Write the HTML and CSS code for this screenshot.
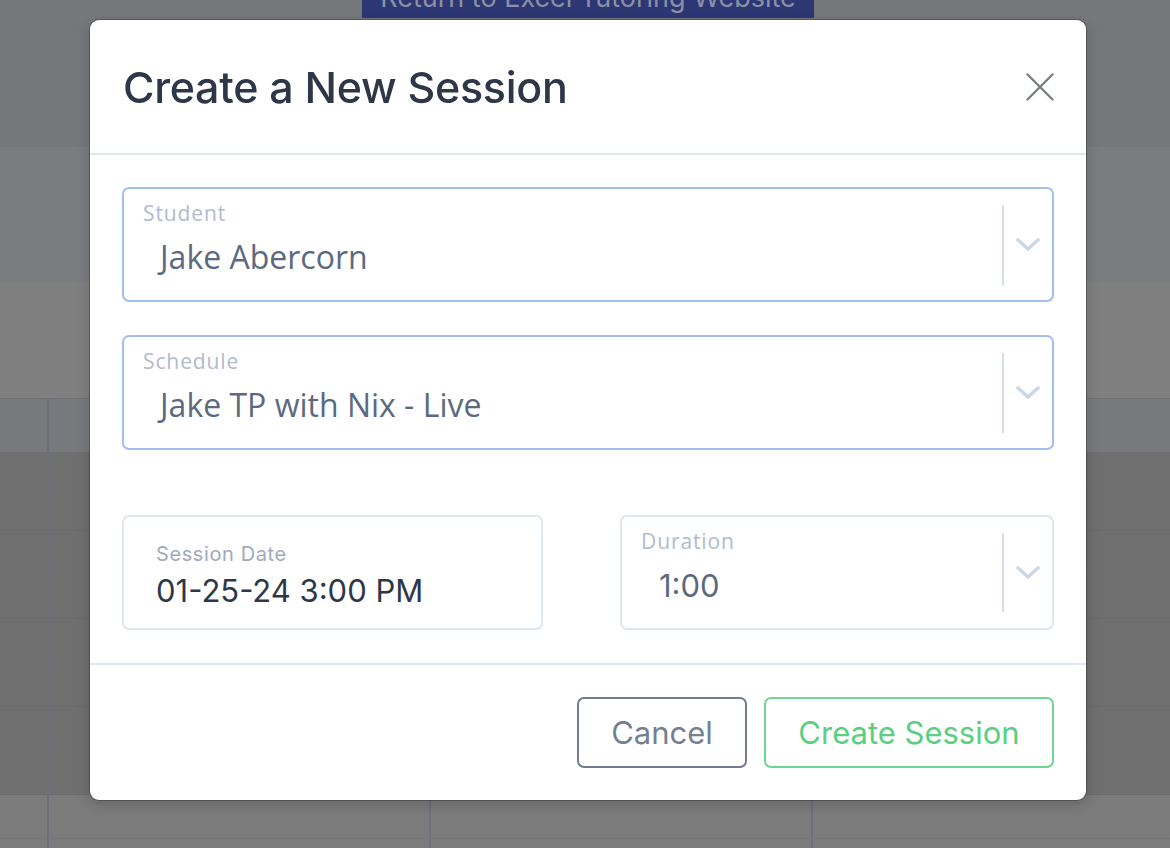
FILE: index.html
```html
<!doctype html>
<html lang="en-us">

<head>
    <title>Sessions : Calendar</title>

    <link rel="stylesheet" href="styles.css">
</head>

<body>
    <div id="calendar">
        <div class="cal-top">
            <a class="return-btn" href="#">Return to Excel Tutoring Website</a>
        </div>
        <div class="cal-band band-a"></div>
        <div class="cal-band band-b"></div>

        <div class="cal-head">
            <div class="gutter"></div>
            <div class="day"></div>
            <div class="day"></div>
            <div class="day"></div>
        </div>

        <div class="slot busy short half"><div class="gutter"></div><div class="day"></div><div class="day"></div><div class="day"></div></div>
        <div class="slot busy"><div class="gutter"></div><div class="day"></div><div class="day"></div><div class="day"></div></div>
        <div class="slot busy half"><div class="gutter"></div><div class="day"></div><div class="day"></div><div class="day"></div></div>
        <div class="slot busy"><div class="gutter"></div><div class="day"></div><div class="day"></div><div class="day"></div></div>
        <div class="slot busy half"><div class="gutter"></div><div class="day"></div><div class="day"></div><div class="day"></div></div>
        <div class="slot busy"><div class="gutter"></div><div class="day"></div><div class="day"></div><div class="day"></div></div>
        <div class="slot busy half"><div class="gutter"></div><div class="day"></div><div class="day"></div><div class="day"></div></div>
        <div class="slot busy"><div class="gutter"></div><div class="day"></div><div class="day"></div><div class="day"></div></div>
        <div class="slot half"><div class="gutter"></div><div class="day"></div><div class="day"></div><div class="day"></div></div>
        <div class="slot"><div class="gutter"></div><div class="day"></div><div class="day"></div><div class="day"></div></div>
    </div>

    <div id="overlay">
        <div class="modal">
            <div class="modal-header">
                <h2>Create a New Session</h2>
                <button class="close" aria-label="Close">
                    <svg width="28" height="28" viewBox="0 0 28 28">
                        <path d="M1.5 1.5 L26.5 26.5 M26.5 1.5 L1.5 26.5" stroke="#7a7e85" stroke-width="2.4" stroke-linecap="round" fill="none" />
                    </svg>
                </button>
            </div>

            <div class="modal-body">
                <div class="field select focused">
                    <div class="field-main">
                        <div class="label">Student</div>
                        <div class="value">Jake Abercorn</div>
                    </div>
                    <span class="sep"></span>
                    <span class="chev">
                        <svg width="24" height="14" viewBox="0 0 24 14"><path d="M2 2 L12 11 L22 2" stroke="#cdd6e4" stroke-width="3.6" stroke-linecap="round" stroke-linejoin="round" fill="none" /></svg>
                    </span>
                </div>

                <div class="field select focused">
                    <div class="field-main">
                        <div class="label">Schedule</div>
                        <div class="value">Jake TP with Nix - Live</div>
                    </div>
                    <span class="sep"></span>
                    <span class="chev">
                        <svg width="24" height="14" viewBox="0 0 24 14"><path d="M2 2 L12 11 L22 2" stroke="#cdd6e4" stroke-width="3.6" stroke-linecap="round" stroke-linejoin="round" fill="none" /></svg>
                    </span>
                </div>

                <div class="row">
                    <div class="field date">
                        <div class="date-label">Session Date</div>
                        <div class="date-value">01-25-24 3:00 PM</div>
                    </div>
                    <div class="field select duration">
                        <div class="field-main">
                            <div class="label">Duration</div>
                            <div class="value">1:00</div>
                        </div>
                        <span class="sep"></span>
                        <span class="chev">
                            <svg width="24" height="14" viewBox="0 0 24 14"><path d="M2 2 L12 11 L22 2" stroke="#cdd6e4" stroke-width="3.6" stroke-linecap="round" stroke-linejoin="round" fill="none" /></svg>
                        </span>
                    </div>
                </div>
            </div>

            <div class="modal-footer">
                <button class="btn btn-cancel">Cancel</button>
                <button class="btn btn-create">Create Session</button>
            </div>
        </div>
    </div>
</body>

</html>
```

FILE: styles.css
```css
html, body {
    margin: 0;
    height: 100%;
    overflow: hidden;
}

body {
    font-family: Inter, "Liberation Sans", sans-serif;
    background-color: #7b7b7b;
}

/* calendar behind the modal (already dimmed) */
.cal-top {
    height: 147px;
    background-color: #76777b;
    display: flex;
    justify-content: center;
    padding-left: 6px;
}

.return-btn {
    display: block;
    margin-top: -22px;
    height: 40px;
    width: 452px;
    box-sizing: border-box;
    background-color: #2c3773;
    color: #8b90a8;
    text-decoration: none;
    font-size: 27px;
    text-align: center;
    line-height: 40px;
    align-self: flex-start;
}

.cal-band {
    background-color: #7b7c80;
}

.band-a {
    height: 135px;
}

.band-b {
    height: 116px;
    background-color: #7f7f7f;
}

.cal-head,
.slot {
    display: flex;
}

.cal-head {
    height: 53px;
    border-top: 1px solid #707278;
    background-color: #78797d;
}

.gutter {
    width: 47px;
    flex-shrink: 0;
}

.day {
    width: 382px;
    flex-shrink: 0;
    border-left: 2px solid #6e7077;
    box-sizing: border-box;
}

.slot {
    height: 43px;
    border-bottom: 1px solid #6a6b70;
}

.slot.half {
    border-bottom: 1px dotted #727378;
}

.slot.short {
    height: 34px;
}

.slot.busy {
    background-color: #6f6f6f;
}

/* modal */
#overlay {
    position: fixed;
    inset: 0;
    padding: 20px 0 0 90px;
}

.modal {
    width: 996px;
    background-color: #fff;
    border-radius: 9px;
    box-shadow: 0 0 0 1px rgba(40, 40, 44, 0.35), 0 4px 14px rgba(0, 0, 0, 0.18);
    overflow: hidden;
}

.modal-header {
    height: 133px;
    display: flex;
    align-items: center;
    justify-content: space-between;
    padding: 0 32px 0 33px;
    border-bottom: 2px solid #e2e8f0;
}

.modal-header h2 {
    margin: 0;
    font-size: 43px;
    font-weight: 500;
    color: #2d3748;
    letter-spacing: -0.3px;
}

.close {
    border: 0;
    background: none;
    padding: 0;
    width: 28px;
    height: 28px;
    display: flex;
}

.modal-body {
    padding: 32px 32px 33px;
    display: flex;
    flex-direction: column;
    gap: 33px;
}

.field {
    height: 115px;
    box-sizing: border-box;
    border: 2px solid #e0e6ef;
    border-radius: 7px;
    background-color: #fff;
}

.field.focused {
    border-color: #a3bff2;
}

.select {
    display: flex;
}

.field-main {
    flex: 1;
    padding: 11px 0 0 19px;
    font-family: "Open Sans", "Noto Sans", sans-serif;
}

.label {
    font-size: 21px;
    letter-spacing: 0.9px;
    color: #b1bbcc;
    line-height: 26px;
}

.value {
    padding-left: 17px;
    margin-top: 10px;
    font-size: 32px;
    color: #5b6a80;
    line-height: 42px;
}

.sep {
    width: 2px;
    margin: 16px 0 15px;
    background-color: #d6deeb;
}

.chev {
    width: 48px;
    display: flex;
    align-items: center;
    justify-content: center;
}

.row {
    margin-top: 32px;
    display: flex;
    gap: 77px;
}

.date {
    width: 421px;
    padding: 24px 0 0 32px;
}

.date-label {
    font-size: 20px;
    color: #a0aabb;
    letter-spacing: 0.6px;
    line-height: 26px;
}

.date-value {
    margin-top: 5px;
    font-size: 31px;
    color: #2d3748;
    line-height: 38px;
}

.duration {
    flex: 1;
}

.duration .field-main {
    padding-top: 11px;
}

.duration .value {
    font-family: Inter, sans-serif;
    font-size: 31px;
    margin-top: 11px;
    padding-left: 18px;
}

.duration .sep {
    margin: 16px 0 16px;
}

.modal-footer {
    border-top: 2px solid #e2e8f0;
    padding: 32px 32px 32px;
    display: flex;
    justify-content: flex-end;
    gap: 17px;
}

.btn {
    height: 71px;
    box-sizing: border-box;
    border: 2px solid;
    border-radius: 7px;
    background-color: #fff;
    font-family: Inter, sans-serif;
    font-size: 31px;
    padding: 0 30px;
}

.btn-cancel {
    border-color: #737c8f;
    color: #737f93;
    width: 170px;
}

.btn-create {
    border-color: #6ed593;
    color: #5bcf80;
    width: 290px;
}
```
